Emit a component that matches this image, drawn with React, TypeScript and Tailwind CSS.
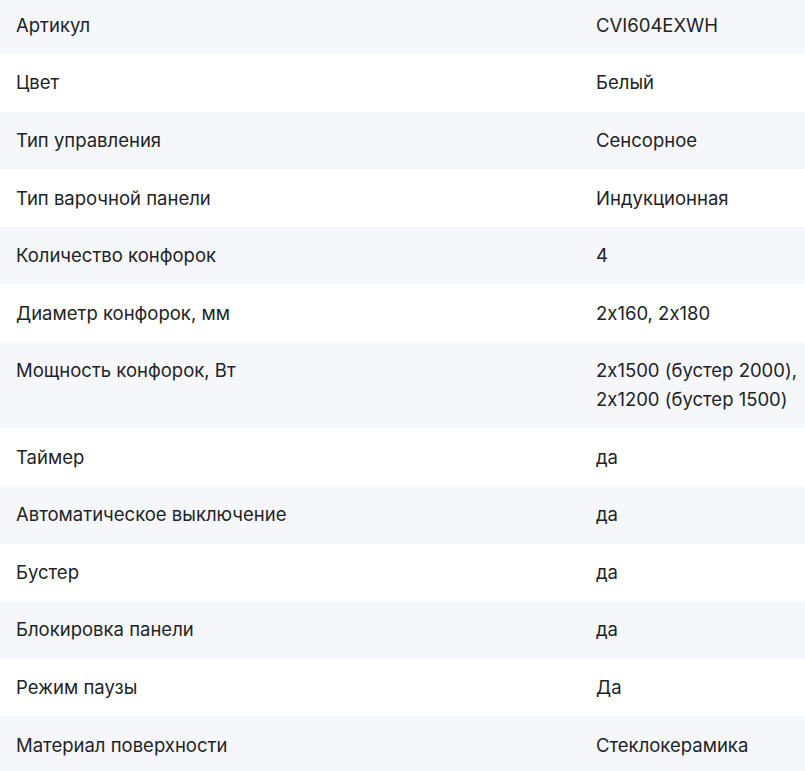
const specs: [string, string][] = [
  ['Артикул', 'CVI604EXWH'],
  ['Цвет', 'Белый'],
  ['Тип управления', 'Сенсорное'],
  ['Тип варочной панели', 'Индукционная'],
  ['Количество конфорок', '4'],
  ['Диаметр конфорок, мм', '2x160, 2x180'],
  ['Мощность конфорок, Вт', '2x1500 (бустер 2000),\n2x1200 (бустер 1500)'],
  ['Таймер', 'да'],
  ['Автоматическое выключение', 'да'],
  ['Бустер', 'да'],
  ['Блокировка панели', 'да'],
  ['Режим паузы', 'Да'],
  ['Материал поверхности', 'Стеклокерамика'],
]

export default function App() {
  return (
    <div className="h-[771px] overflow-hidden bg-white font-['Inter','Noto_Sans',sans-serif] text-[18.5px] leading-[28.8px] text-[#222326] [font-feature-settings:'calt'_0]">
      <div className="-mt-[3.5px]">
        {specs.map(([name, value], i) => (
          <div
            key={name}
            className={`grid grid-cols-[580px_1fr] px-4 py-[14.4px] ${i % 2 === 0 ? 'bg-[#f6f7fb]' : 'bg-white'}`}
          >
            <div>{name}</div>
            <div className="whitespace-pre">{value}</div>
          </div>
        ))}
      </div>
    </div>
  )
}
